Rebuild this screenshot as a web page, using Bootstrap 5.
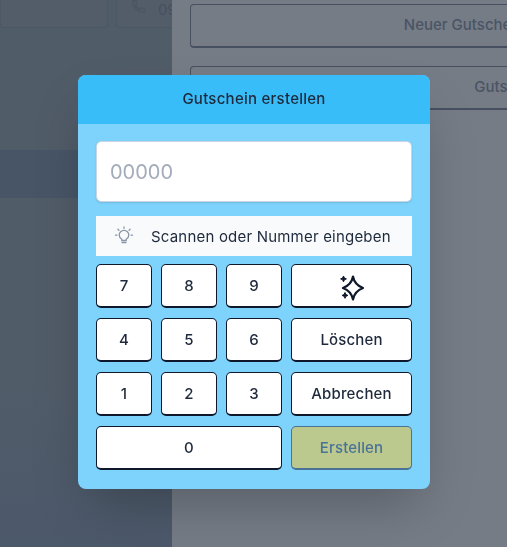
<!DOCTYPE html>
<html lang="de">
<head>
  <meta charset="UTF-8">
  <title>Gutschein erstellen</title>
  <link rel="stylesheet" href="https://cdn.jsdelivr.net/npm/bootstrap@5.3.3/dist/css/bootstrap.min.css">
  <style>
    html, body { height: 100%; overflow: hidden; }
    body { font-family: Inter, "Liberation Sans", sans-serif; color: #1e293b; background: #757c86; }
    .page-wrap { width: 800px; height: 547px; }
    .side-left { width: 172px; flex: none; background: linear-gradient(#515c69 0, #515c69 70%, #4c596b 100%); overflow: hidden; }
    .top-cards { height: 28px; margin-bottom: 122px; gap: 8px; width: 300px; }
    .top-tile { height: 28px; background: #535d69; border: 1px solid #4c5865; border-top: 0; border-radius: 0 0 4px 4px; color: #455160; font-size: 15px; }
    .tile-a { width: 108px; }
    .tile-b { width: 100px; padding-left: 14px; gap: 11px; }
    .tile-b span { margin-top: -7px; }
    .tile-b svg { margin-top: -14px; }
    .row-active { height: 48px; background: #475567; }
    .side-right { flex: 1; background: #757c86; padding: 4px 0 0 18px; }
    .ghost-btn { width: 548px; height: 44px; border: 1px solid #465060; border-bottom-width: 2px; border-radius: 4px; color: #4a5464; font-size: 15px; font-weight: 500; }
    .ghost-low { margin-top: 18px; }
    .ghost-low span { margin-left: 102px; }
    .overlay-box { position: fixed; inset: 0; }
    .voucher-box { position: absolute; left: 78px; top: 75px; width: 352px; height: 414px; background: #7dd3fc; border-radius: 8px; overflow: hidden; box-shadow: 0 25px 50px -12px rgba(0,0,0,.25); }
    .voucher-head { height: 49px; background: #38bdf8; font-size: 15px; font-weight: 500; letter-spacing: .25px; }
    .voucher-body { padding: 17px 18px 0; }
    .code-input.form-control { height: 61px; font-size: 20px; padding: 0 13px; border: 1px solid #cbd5e1; border-radius: 5px; box-shadow: 0 1px 2px rgba(0,0,0,.12); font-family: Inter, sans-serif; }
    .code-input::placeholder { color: #a3acba; }
    .hint-bar { height: 40px; margin-top: 14px; margin-bottom: 8px; background: #f8fafc; padding-left: 18px; gap: 17px; font-size: 15px; color: #1e293b; letter-spacing: .2px; }
    .hint-bar span { margin-top: 2px; }
    .key-grid { display: grid; grid-template-columns: 56px 56px 56px 121px; grid-auto-rows: 44px; column-gap: 9px; row-gap: 10px; }
    .key-btn.btn { background: #fff; color: #1e293b; border: 1px solid #0f172a; border-bottom-width: 2px; border-radius: 5px; font-size: 15px; font-weight: 500; padding: 2px 0 0; letter-spacing: .15px; }
    .key-wide { grid-column: span 3; }
    .key-btn.key-off { background: #bbc98f; color: #4a7296; border-color: #4a7296; opacity: 1; }
  </style>
</head>
<body>
  <div class="page-wrap d-flex">
    <div class="side-left">
      <div class="top-cards d-flex">
        <div class="top-tile tile-a flex-none"></div>
        <div class="top-tile tile-b d-flex align-items-center flex-none">
          <svg width="16" height="16" viewBox="0 0 16 16" fill="none" stroke="#4a5664" stroke-width="1.3"><path d="M2 1.500h3l1.200 3.500-1.700 1.200c.8 2 2.400 3.600 4.400 4.400l1.200-1.700 3.400 1.200v3c-6.500.8-12-4.700-11.500-11.600z"/></svg>
          <span>09</span>
        </div>
      </div>
      <div class="row-active"></div>
    </div>
    <div class="side-right">
      <div class="ghost-btn d-flex align-items-center justify-content-center">Neuer Gutschein</div>
      <div class="ghost-btn ghost-low d-flex align-items-center justify-content-center"><span>Gutscheine</span></div>
    </div>
  </div>

  <div class="overlay-box">
    <div class="voucher-box">
      <div class="voucher-head d-flex align-items-center justify-content-center">Gutschein erstellen</div>
      <div class="voucher-body">
        <input type="text" class="form-control code-input" placeholder="00000">
        <div class="hint-bar d-flex align-items-center">
          <svg width="20" height="20" viewBox="0 0 20 20" fill="none" stroke="#8b95a5" stroke-width="1.3" stroke-linecap="round">
            <path d="M7.800 14.500v-1.300c-1.500-.8-2.600-2.300-2.600-4.100a4.800 4.800 0 0 1 9.600 0c0 1.800-1.100 3.300-2.600 4.100v1.300z"/>
            <path d="M8 16.500h4M10 1v1.300M3.900 3.300l1 1M16.100 3.300l-1 1M1.500 9.200h1.300M17.200 9.200h1.300"/>
          </svg>
          <span>Scannen oder Nummer eingeben</span>
        </div>
        <div class="key-grid">
          <button class="btn key-btn">7</button>
          <button class="btn key-btn">8</button>
          <button class="btn key-btn">9</button>
          <button class="btn key-btn d-flex align-items-center justify-content-center" aria-label="Automatisch">
            <svg width="24" height="28" viewBox="0 0 24 28" fill="none" stroke="#0f172a" stroke-width="2.200" stroke-linejoin="round">
              <path d="M13 3.500c1 5.500 3.500 9 10 11.500-6.500 2.500-9 6-10 11.500-1-5.500-3.500-9-10-11.500 6.500-2.500 9-6 10-11.500z"/>
              <path d="M3.500 3l.9 2 2 .9-2 .9-.9 2-.9-2-2-.9 2-.9zM5 19.500l.9 2 2 .9-2 .9-.9 2-.9-2-2-.9 2-.9z" fill="#0f172a" stroke-width="1"/>
            </svg>
          </button>
          <button class="btn key-btn">4</button>
          <button class="btn key-btn">5</button>
          <button class="btn key-btn">6</button>
          <button class="btn key-btn">Löschen</button>
          <button class="btn key-btn">1</button>
          <button class="btn key-btn">2</button>
          <button class="btn key-btn">3</button>
          <button class="btn key-btn">Abbrechen</button>
          <button class="btn key-btn key-wide">0</button>
          <button class="btn key-btn key-off" disabled>Erstellen</button>
        </div>
      </div>
    </div>
  </div>
  <script src="https://cdn.jsdelivr.net/npm/bootstrap@5.3.3/dist/js/bootstrap.bundle.min.js"></script>
</body>
</html>
